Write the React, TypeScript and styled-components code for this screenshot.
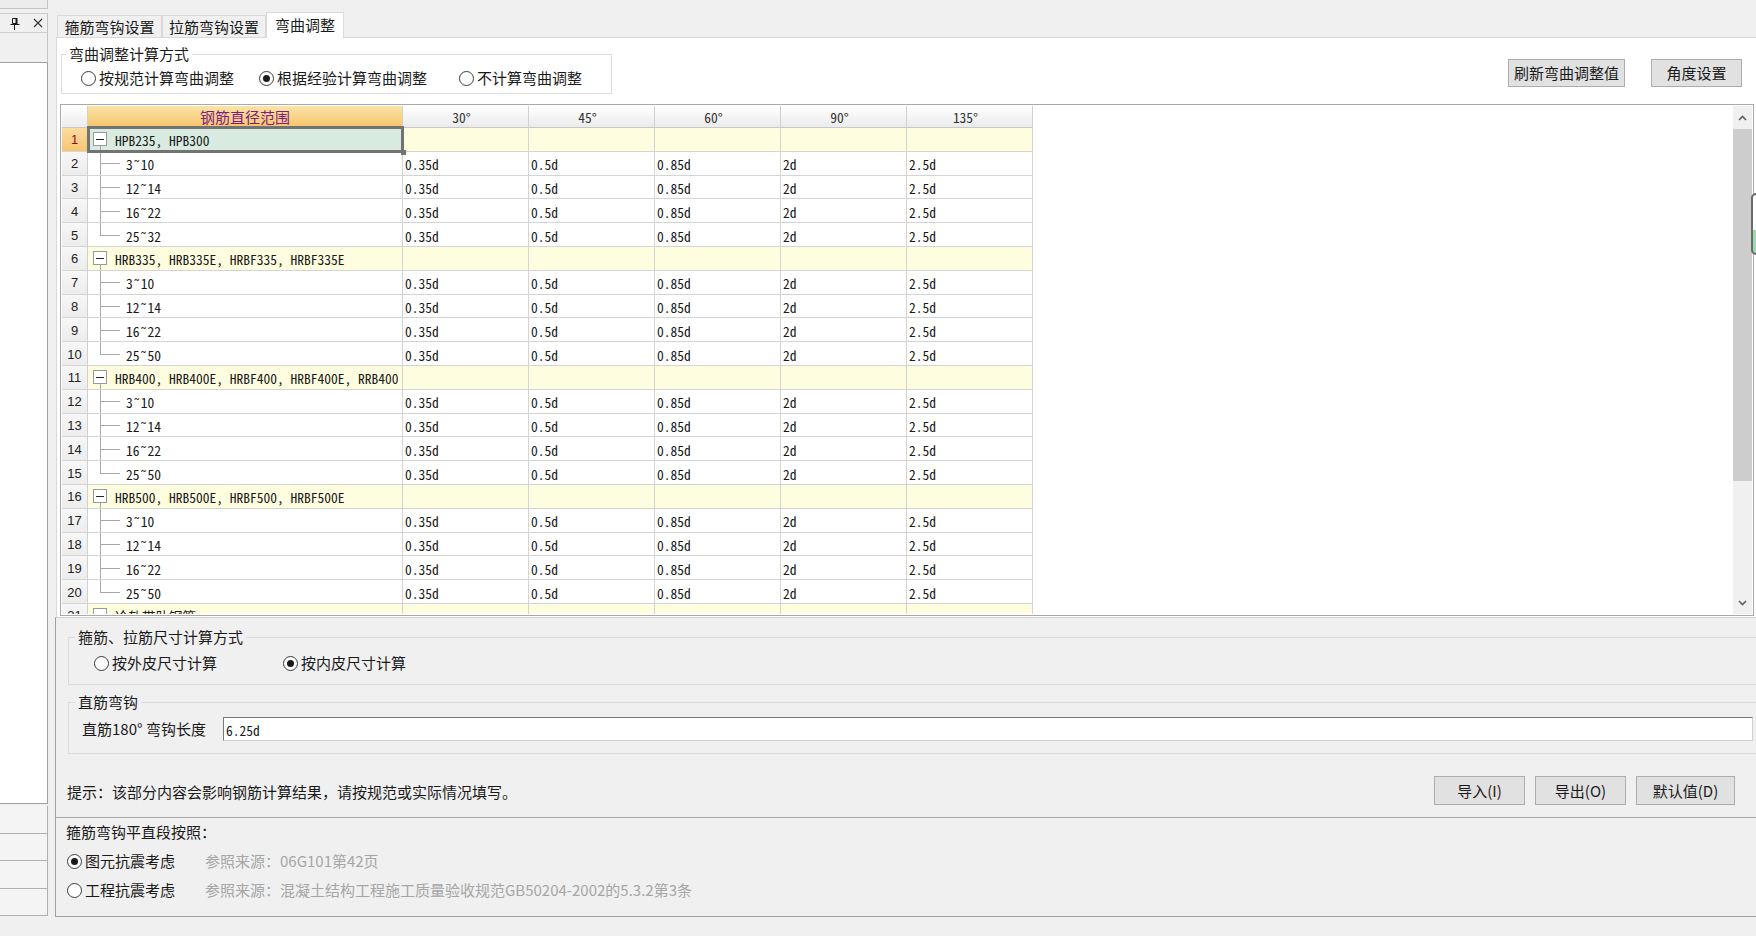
import React from "react";
import styled, { createGlobalStyle, css } from "styled-components";

const GlobalStyle = createGlobalStyle`
  * { box-sizing: border-box; }
  html, body { margin: 0; padding: 0; background: #f0f0f0; }
  body {
    width: 1756px;
    height: 936px;
    overflow: hidden;
    font-family: "Noto Sans CJK SC", "Liberation Sans", sans-serif;
    font-size: 15px;
    color: #1a1a1a;
  }
`;

const MONO = `"Noto Sans Mono CJK SC", "Liberation Mono", monospace`;

const Page = styled.div`
  position: relative;
  display: flex;
  width: 1756px;
  height: 936px;
  overflow: hidden;
`;

/* ---------- left dock ---------- */

const LeftDock = styled.div`
  width: 48px;
  flex-shrink: 0;
  display: flex;
  flex-direction: column;
`;

const DockStub = styled.div`
  height: 9px;
  background: #ececec;
  border-right: 1px solid #c4c4c4;
  border-bottom: 1px solid #c4c4c4;
`;

const DockTitle = styled.div`
  margin-top: 4px;
  height: 20px;
  display: flex;
  align-items: center;
  justify-content: space-between;
  padding: 0 4px 0 10px;
  border-top: 1px solid #cfcfcf;
  border-bottom: 1px solid #cfcfcf;
  border-right: 1px solid #c4c4c4;
`;

const DockToolRow = styled.div`
  height: 30px;
  border-right: 1px solid #c4c4c4;
  border-bottom: 1px solid #a0a0a0;
`;

const DockList = styled.div`
  height: 741px;
  background: #fff;
  border-right: 1px solid #a0a0a0;
  border-bottom: 1px solid #a0a0a0;
`;

const DockButtons = styled.div`
  margin-top: 2px;
  display: flex;
  flex-direction: column;
`;

const DockButton = styled.div`
  height: 27.5px;
  background: #f4f4f4;
  border-right: 1px solid #b0b0b0;
  border-bottom: 1px solid #b0b0b0;
`;

/* ---------- main ---------- */

const Main = styled.div`
  flex: 1;
  min-width: 0;
  margin-left: 7px;
  display: flex;
  flex-direction: column;
`;

const TabStrip = styled.div`
  height: 37px;
  display: flex;
  align-items: flex-end;
  padding-left: 2px;
`;

const Tab = styled.div<{ $active?: boolean; $w: number }>`
  width: ${(p) => p.$w}px;
  height: ${(p) => (p.$active ? 26 : 22)}px;
  display: flex;
  align-items: center;
  justify-content: center;
  border: 1px solid #d9d9d9;
  border-bottom: none;
  line-height: 18px;
  background: ${(p) => (p.$active ? "#fff" : "#f0f0f0")};
  ${(p) =>
    p.$active &&
    css`
      position: relative;
      z-index: 1;
      margin-bottom: -1px;
      padding-bottom: 2px;
    `}
`;

const TabPanel = styled.div`
  margin-left: 1px;
  height: 580px;
  background: #fff;
  border-top: 1px solid #d9d9d9;
  border-left: 1px solid #d9d9d9;
  padding: 0 1px 0 3px;
  display: flex;
  flex-direction: column;
`;

const TopRow = styled.div`
  height: 66px;
  display: flex;
  align-items: flex-start;
`;

const GroupBox = styled.fieldset<{ $w?: number }>`
  margin: 0;
  padding: 0;
  min-width: 0;
  border: 1px solid #dcdcdc;
  ${(p) => p.$w && `width: ${p.$w}px;`}
`;

const GroupLegend = styled.legend<{ $indent: number }>`
  margin-left: ${(p) => p.$indent}px;
  padding: 0 3px;
  line-height: 18px;
  font-size: 15px;
`;

const MethodBox = styled(GroupBox)`
  margin: 7px 0 0 1px;
`;

const RadioRow = styled.div<{ $pl: number; $pt: number; $pb: number }>`
  display: flex;
  align-items: center;
  height: 20px;
  box-sizing: content-box;
  padding: ${(p) => `${p.$pt}px 0 ${p.$pb}px ${p.$pl}px`};
`;

const RadioItem = styled.label<{ $w?: number }>`
  display: flex;
  align-items: center;
  gap: 3px;
  line-height: 18px;
  white-space: nowrap;
  ${(p) => p.$w && `width: ${p.$w}px;`}
`;

const RadioCircle = styled.span<{ $checked?: boolean }>`
  position: relative;
  width: 15px;
  height: 15px;
  flex-shrink: 0;
  border-radius: 50%;
  border: 1px solid #3c3c3c;
  background: #fff;
  ${(p) =>
    p.$checked &&
    css`
      &::after {
        content: "";
        position: absolute;
        left: 3px;
        top: 3px;
        width: 7px;
        height: 7px;
        border-radius: 50%;
        background: #1a1a1a;
      }
    `}
`;

const TopButtons = styled.div`
  margin-left: auto;
  margin-right: 13px;
  padding-top: 21px;
  display: flex;
  gap: 26px;
`;

const Button = styled.button<{ $w: number; $h?: number }>`
  width: ${(p) => p.$w}px;
  height: ${(p) => p.$h ?? 28}px;
  padding: 0;
  border: 1px solid #adadad;
  background: #e1e1e1;
  font-family: "Noto Sans CJK SC", "Liberation Sans", sans-serif;
  font-size: 15px;
  line-height: 18px;
  color: #1a1a1a;
`;

/* ---------- grid ---------- */

const GridFrame = styled.div`
  height: 512px;
  margin-right: 1px;
  border: 1px solid #a9a9a9;
  padding: 1px;
  display: flex;
  background: #fff;
`;

const GridBody = styled.div`
  flex: 1;
  overflow: hidden;
`;

const COLS = "26px 315px repeat(5, 126px)";

const GridRow = styled.div<{ $h: number }>`
  display: grid;
  grid-template-columns: ${COLS};
  width: 971px;
  height: ${(p) => p.$h}px;
`;

const Cell = styled.div<{ $group?: boolean }>`
  position: relative;
  display: flex;
  align-items: center;
  border-right: 1px solid #d4d4d4;
  border-bottom: 1px solid #d4d4d4;
  background: ${(p) => (p.$group ? "#fffde0" : "#fff")};
  font-family: ${MONO};
  font-size: 13.5px;
  line-height: 18px;
  padding: 2px 0 0 2px;
  white-space: nowrap;
  overflow: hidden;
`;

const HeadCell = styled.div<{ $kind?: "corner" | "key" | "plain" }>`
  display: flex;
  align-items: center;
  justify-content: center;
  border-right: 1px solid #d0d0d0;
  border-bottom: 1px solid #c8c8c8;
  font-family: ${MONO};
  font-size: 13.5px;
  padding-right: 8px;
  color: #333;
  background: ${(p) =>
    p.$kind === "key"
      ? "linear-gradient(#fbe3a8, #f6c56a)"
      : "linear-gradient(#ffffff, #ebebeb)"};
  ${(p) =>
    p.$kind === "key" &&
    css`
      padding-right: 0;
      font-family: "Noto Sans CJK SC", sans-serif;
      font-size: 15px;
      color: #7d1e84;
    `}
`;

const RowNum = styled.div<{ $current?: boolean }>`
  display: flex;
  align-items: center;
  justify-content: center;
  padding-top: 1px;
  border-right: 1px solid #d0d0d0;
  border-bottom: 1px solid #d4d4d4;
  font-family: "Liberation Sans", sans-serif;
  font-size: 13px;
  color: ${(p) => (p.$current ? "#8b1010" : "#222")};
  background: ${(p) =>
    p.$current ? "linear-gradient(#fbdca0, #f6c672)" : "linear-gradient(#f7f7f7, #ececec)"};
`;

const GroupCell = styled(Cell)<{ $selected?: boolean }>`
  padding-left: 27px;
  ${(p) => p.$selected && `background: #d9ebe0;`}
  &::before {
    content: "";
    position: absolute;
    left: 12px;
    top: calc(50% + 7px);
    bottom: -1px;
    border-left: 1px solid #a8a8a8;
  }
  ${(p) =>
    p.$selected &&
    css`
      overflow: visible;
      z-index: 2;
      &::after {
        content: "";
        position: absolute;
        inset: -2px -2px -2px -1px;
        border: 3px solid #737373;
        pointer-events: none;
      }
    `}
`;

const FoldBox = styled.span`
  position: absolute;
  left: 5px;
  top: 50%;
  margin-top: -7px;
  width: 14px;
  height: 14px;
  border: 1px solid #9a9a9a;
  background: #fff;
  &::after {
    content: "";
    position: absolute;
    left: 2px;
    right: 2px;
    top: 5.5px;
    border-top: 1.5px solid #222;
  }
`;

const Handle = styled.span`
  position: absolute;
  right: -4px;
  bottom: -4px;
  width: 5px;
  height: 5px;
  background: #737373;
  z-index: 3;
`;

const TreeCell = styled(Cell)<{ $last?: boolean }>`
  padding-left: 38px;
  &::before {
    content: "";
    position: absolute;
    left: 12px;
    top: -1px;
    bottom: ${(p) => (p.$last ? "50%" : "-1px")};
    border-left: 1px solid #a8a8a8;
  }
  &::after {
    content: "";
    position: absolute;
    left: 12px;
    width: 20px;
    top: 50%;
    border-top: 1px solid #a8a8a8;
  }
`;

const Scrollbar = styled.div`
  width: 19px;
  background: #f0f0f0;
  display: flex;
  flex-direction: column;
`;

const ScrollArrow = styled.div`
  height: 23px;
  display: flex;
  align-items: center;
  justify-content: center;
`;

const ScrollThumb = styled.div`
  height: 352px;
  background: #cdcdcd;
`;

const ScrollTrack = styled.div`
  flex: 1;
`;

const EdgeHandle = styled.div`
  position: absolute;
  left: 1751px;
  top: 193px;
  width: 10px;
  height: 62px;
  border: 2px solid #6a6a6a;
  border-radius: 5px;
  background: linear-gradient(#ffffff 60%, #9fd8b0 60%);
`;

/* ---------- bottom ---------- */

const BottomPanel = styled.div`
  height: 300px;
  border-left: 1px solid #a0a0a0;
  border-top: 1px solid #cdcdcd;
  border-bottom: 1px solid #a0a0a0;
  padding-left: 12px;
  display: flex;
  flex-direction: column;
  overflow: hidden;
`;

const SizeBox = styled(GroupBox)`
  margin: 10px -10px 0 0;
`;

const HookBox = styled(GroupBox)`
  margin: 8px -10px 0 0;
`;

const HookRow = styled.div`
  display: flex;
  align-items: center;
  padding: 6px 12px 12px 13px;
`;

const HookLabel = styled.span`
  width: 141px;
  line-height: 18px;
  white-space: nowrap;
`;

const HookInput = styled.div`
  flex: 1;
  height: 24px;
  display: flex;
  align-items: center;
  background: #fff;
  border: 1px solid #7a7a7a;
  border-right-color: #d0d0d0;
  border-bottom-color: #d0d0d0;
  padding: 1px 0 0 2px;
  font-family: ${MONO};
  font-size: 13.5px;
`;

const TipRow = styled.div`
  margin: 22px 21px 0 -1px;
  height: 29px;
  display: flex;
  align-items: center;
`;

const TipText = styled.span`
  line-height: 18px;
  margin-top: 3px;
`;

const TipButtons = styled.div`
  margin-left: auto;
  display: flex;
  gap: 10px;
`;

const LowerSection = styled.div`
  margin: 12px 0 0 -12px;
  border-top: 1px solid #a8a8a8;
  padding: 5px 0 0 10px;
  display: flex;
  flex-direction: column;
  gap: 11px;
`;

const LowerTitle = styled.div`
  line-height: 18px;
`;

const RefRow = styled.div`
  display: flex;
  align-items: center;
  height: 18px;
  padding-left: 1px;
`;

const RefText = styled.span`
  color: #a6a6a6;
  line-height: 18px;
  white-space: nowrap;
`;

/* ---------- data ---------- */

const groups = [
  { name: "HPB235, HPB300", ranges: ["3˜10", "12˜14", "16˜22", "25˜32"] },
  { name: "HRB335, HRB335E, HRBF335, HRBF335E", ranges: ["3˜10", "12˜14", "16˜22", "25˜50"] },
  { name: "HRB400, HRB400E, HRBF400, HRBF400E, RRB400", ranges: ["3˜10", "12˜14", "16˜22", "25˜50"] },
  { name: "HRB500, HRB500E, HRBF500, HRBF500E", ranges: ["3˜10", "12˜14", "16˜22", "25˜50"] },
  { name: "冷轧带肋钢筋", ranges: ["4˜12"] },
];

const angles = ["30°", "45°", "60°", "90°", "135°"];
const values = ["0.35d", "0.5d", "0.85d", "2d", "2.5d"];
const ROW_H = 23.8;

function PinIcon() {
  return (
    <svg width="10" height="13" viewBox="0 0 10 13">
      <path d="M2.5 1.5h4v5h-4z" fill="none" stroke="#1a1a1a" />
      <path d="M6.5 1v6" stroke="#1a1a1a" strokeWidth="2" />
      <path d="M0.5 7.5h9" stroke="#1a1a1a" />
      <path d="M4.5 8v5" stroke="#1a1a1a" />
    </svg>
  );
}

function CloseIcon() {
  return (
    <svg width="10" height="10" viewBox="0 0 10 10">
      <path d="M1 1l8 8M9 1l-8 8" stroke="#333" strokeWidth="1.1" />
    </svg>
  );
}

function Chevron({ down }: { down?: boolean }) {
  return (
    <svg width="9" height="6" viewBox="0 0 9 6">
      <path
        d={down ? "M1 1l3.5 3.5L8 1" : "M1 5l3.5-3.5L8 5"}
        fill="none"
        stroke="#606060"
        strokeWidth="1.6"
      />
    </svg>
  );
}

function Radio({ checked, label, w }: { checked?: boolean; label: string; w?: number }) {
  return (
    <RadioItem $w={w}>
      <RadioCircle $checked={checked} />
      {label}
    </RadioItem>
  );
}

function BendGrid() {
  let n = 0;
  const rows: React.ReactNode[] = [];
  groups.forEach((g, gi) => {
    n += 1;
    const gn = n;
    rows.push(
      <GridRow key={`g${gi}`} $h={ROW_H}>
        <RowNum $current={gn === 1}>{gn}</RowNum>
        <GroupCell $group $selected={gn === 1}>
          <FoldBox />
          {g.name}
          {gn === 1 && <Handle />}
        </GroupCell>
        {angles.map((a) => (
          <Cell key={a} $group />
        ))}
      </GridRow>
    );
    g.ranges.forEach((r, ri) => {
      n += 1;
      rows.push(
        <GridRow key={`r${gi}-${ri}`} $h={ROW_H}>
          <RowNum>{n}</RowNum>
          <TreeCell $last={ri === g.ranges.length - 1}>{r}</TreeCell>
          {values.map((v, vi) => (
            <Cell key={vi}>{v}</Cell>
          ))}
        </GridRow>
      );
    });
  });

  return (
    <GridFrame>
      <GridBody>
        <GridRow $h={22}>
          <HeadCell $kind="corner" />
          <HeadCell $kind="key">钢筋直径范围</HeadCell>
          {angles.map((a) => (
            <HeadCell key={a}>{a}</HeadCell>
          ))}
        </GridRow>
        {rows}
      </GridBody>
      <Scrollbar>
        <ScrollArrow>
          <Chevron />
        </ScrollArrow>
        <ScrollThumb />
        <ScrollTrack />
        <ScrollArrow>
          <Chevron down />
        </ScrollArrow>
      </Scrollbar>
    </GridFrame>
  );
}

export default function App() {
  return (
    <>
      <GlobalStyle />
      <Page>
        <LeftDock>
          <DockStub />
          <DockTitle>
            <PinIcon />
            <CloseIcon />
          </DockTitle>
          <DockToolRow />
          <DockList />
          <DockButtons>
            <DockButton />
            <DockButton />
            <DockButton />
            <DockButton />
          </DockButtons>
        </LeftDock>

        <Main>
          <TabStrip>
            <Tab $w={105}>箍筋弯钩设置</Tab>
            <Tab $w={104}>拉筋弯钩设置</Tab>
            <Tab $w={78} $active>
              弯曲调整
            </Tab>
          </TabStrip>

          <TabPanel>
            <TopRow>
              <MethodBox $w={551}>
                <GroupLegend $indent={4}>弯曲调整计算方式</GroupLegend>
                <RadioRow $pl={19} $pt={5} $pb={5}>
                  <Radio label="按规范计算弯曲调整" w={178} />
                  <Radio label="根据经验计算弯曲调整" checked w={200} />
                  <Radio label="不计算弯曲调整" />
                </RadioRow>
              </MethodBox>
              <TopButtons>
                <Button $w={117}>刷新弯曲调整值</Button>
                <Button $w={91}>角度设置</Button>
              </TopButtons>
            </TopRow>
            <BendGrid />
          </TabPanel>

          <BottomPanel>
            <SizeBox>
              <GroupLegend $indent={6}>箍筋、拉筋尺寸计算方式</GroupLegend>
              <RadioRow $pl={25} $pt={7} $pb={11}>
                <Radio label="按外皮尺寸计算" w={189} />
                <Radio label="按内皮尺寸计算" checked />
              </RadioRow>
            </SizeBox>
            <HookBox>
              <GroupLegend $indent={6}>直筋弯钩</GroupLegend>
              <HookRow>
                <HookLabel>直筋180° 弯钩长度</HookLabel>
                <HookInput>6.25d</HookInput>
              </HookRow>
            </HookBox>
            <TipRow>
              <TipText>提示：该部分内容会影响钢筋计算结果，请按规范或实际情况填写。</TipText>
              <TipButtons>
                <Button $w={91} $h={29}>导入(I)</Button>
                <Button $w={91} $h={29}>导出(O)</Button>
                <Button $w={99} $h={29}>默认值(D)</Button>
              </TipButtons>
            </TipRow>
            <LowerSection>
              <LowerTitle>箍筋弯钩平直段按照：</LowerTitle>
              <RefRow>
                <Radio label="图元抗震考虑" checked w={138} />
                <RefText>参照来源：06G101第42页</RefText>
              </RefRow>
              <RefRow>
                <Radio label="工程抗震考虑" w={138} />
                <RefText>参照来源：混凝土结构工程施工质量验收规范GB50204-2002的5.3.2第3条</RefText>
              </RefRow>
            </LowerSection>
          </BottomPanel>
        </Main>
        <EdgeHandle />
      </Page>
    </>
  );
}
